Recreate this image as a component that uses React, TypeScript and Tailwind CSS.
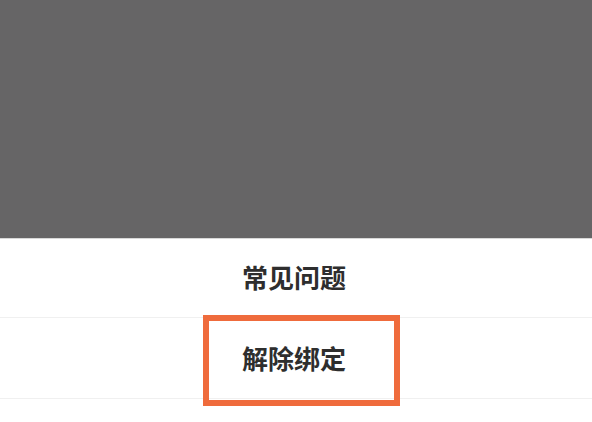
export default function App() {
  return (
    <div className="relative w-[592px] h-[422px] bg-white overflow-hidden" style={{ fontFamily: '"Noto Sans CJK SC", "Noto Sans", sans-serif' }}>
      <div className="h-[239px] bg-[#666566] border-b border-[#d8d8d8]" />
      <div className="h-[79px] flex items-center justify-center border-b border-[#f0f0f0] pb-[4px]">
        <span className="text-[26px] font-bold text-[#2e2e2e] mr-[4px]">常见问题</span>
      </div>
      <div className="h-[81px] flex items-center justify-center border-b border-[#f0f0f0] pb-[2px]">
        <span className="text-[26px] font-bold text-[#2e2e2e] mr-[4px]">解除绑定</span>
      </div>
      {/* annotation box */}
      <div className="absolute left-[203px] top-[315px] w-[197px] h-[91px] border-[6px] border-[#ef6b3c]" />
    </div>
  );
}
